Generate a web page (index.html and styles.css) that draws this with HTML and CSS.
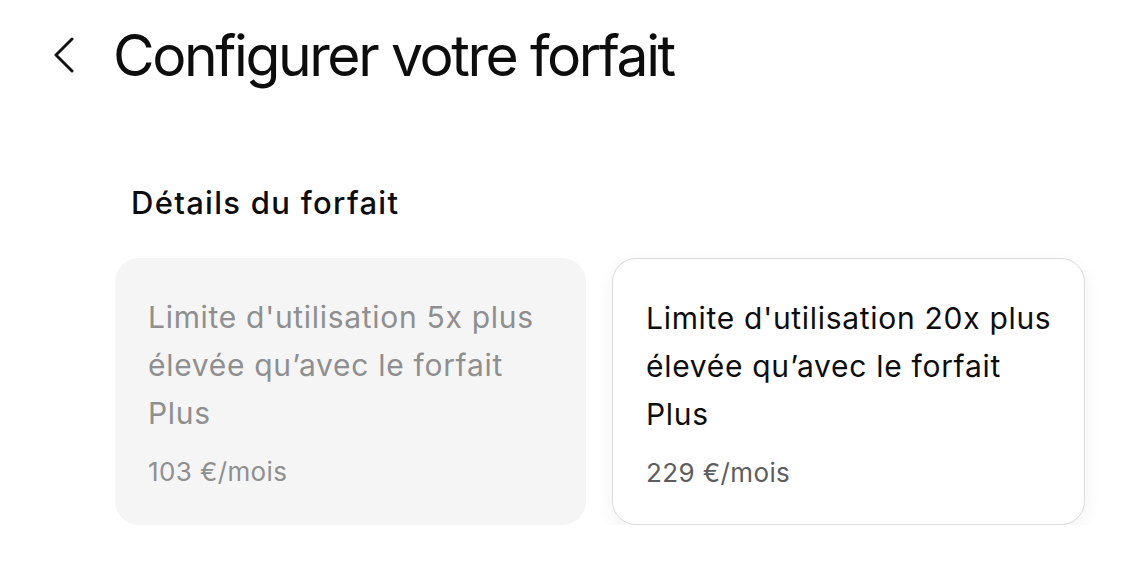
FILE: index.html
```html
<!DOCTYPE html>
<html>

<head>
	<meta charset="UTF-8">
	<title>Configurer votre forfait</title>
	<link rel="stylesheet" href="styles.css">
</head>

<body>
	<div class="header">
		<a class="backButton" href="#">
			<svg width="22" height="36" viewBox="0 0 22 36">
				<path d="M19 2 L3 18 L19 34" fill="none" stroke="#111" stroke-width="3" stroke-linecap="round" stroke-linejoin="round" />
			</svg>
		</a>
		<h1 class="pageTitle">Configurer votre forfait</h1>
	</div>
	<div class="section">
		<h2 class="sectionTitle">Détails du forfait</h2>
		<div class="planGrid">
			<div class="planCard disabled">
				<div class="planText">Limite d'utilisation 5x plus élevée qu’avec le forfait Plus</div>
				<div class="planPrice">103 €/mois</div>
			</div>
			<div class="planCard selected">
				<div class="planText">Limite d'utilisation 20x plus élevée qu’avec le forfait Plus</div>
				<div class="planPrice">229 €/mois</div>
			</div>
		</div>
	</div>
</body>

</html>
```

FILE: styles.css
```css
body {
	margin: 0;
	background: #ffffff;
	color: #0d0d0d;
	font-family: Inter, "Noto Sans", Arial, sans-serif;
}
.header {
	display: flex;
	flex-direction: row;
	align-items: center;
	padding: 20px 0 0 53px;
	height: 70px;
}
.backButton {
	display: flex;
	width: 60px;
}
.pageTitle {
	margin: 0;
	font-size: 57px;
	font-weight: 400;
	letter-spacing: -2.4px;
}
.section {
	padding: 0 0 0 115px;
	width: 970px;
}
.sectionTitle {
	margin: 88px 0 0 16px;
	font-size: 31px;
	font-weight: 500;
	line-height: 50px;
	letter-spacing: 1.3px;
}
.planGrid {
	display: flex;
	flex-direction: row;
	gap: 26px;
	margin-top: 30px;
}
.planCard {
	flex: 1;
	box-sizing: border-box;
	height: 267px;
	padding: 35px 24px 35px 33px;
	border-radius: 24px;
}
.planCard.disabled {
	background-color: #f5f5f5;
	color: #8f8f8f;
}
.planCard.selected {
	background-color: #ffffff;
	border: 1px solid #dcdcdc;
	box-shadow: 0 6px 18px rgba(0, 0, 0, 0.06);
	color: #0d0d0d;
}
.planText {
	font-size: 30px;
	line-height: 48px;
	letter-spacing: 0.7px;
}
.planPrice {
	margin-top: 17px;
	font-size: 26px;
	line-height: 36px;
	letter-spacing: 0.4px;
}
.planCard.selected .planPrice {
	color: #5d5d5d;
}
```
